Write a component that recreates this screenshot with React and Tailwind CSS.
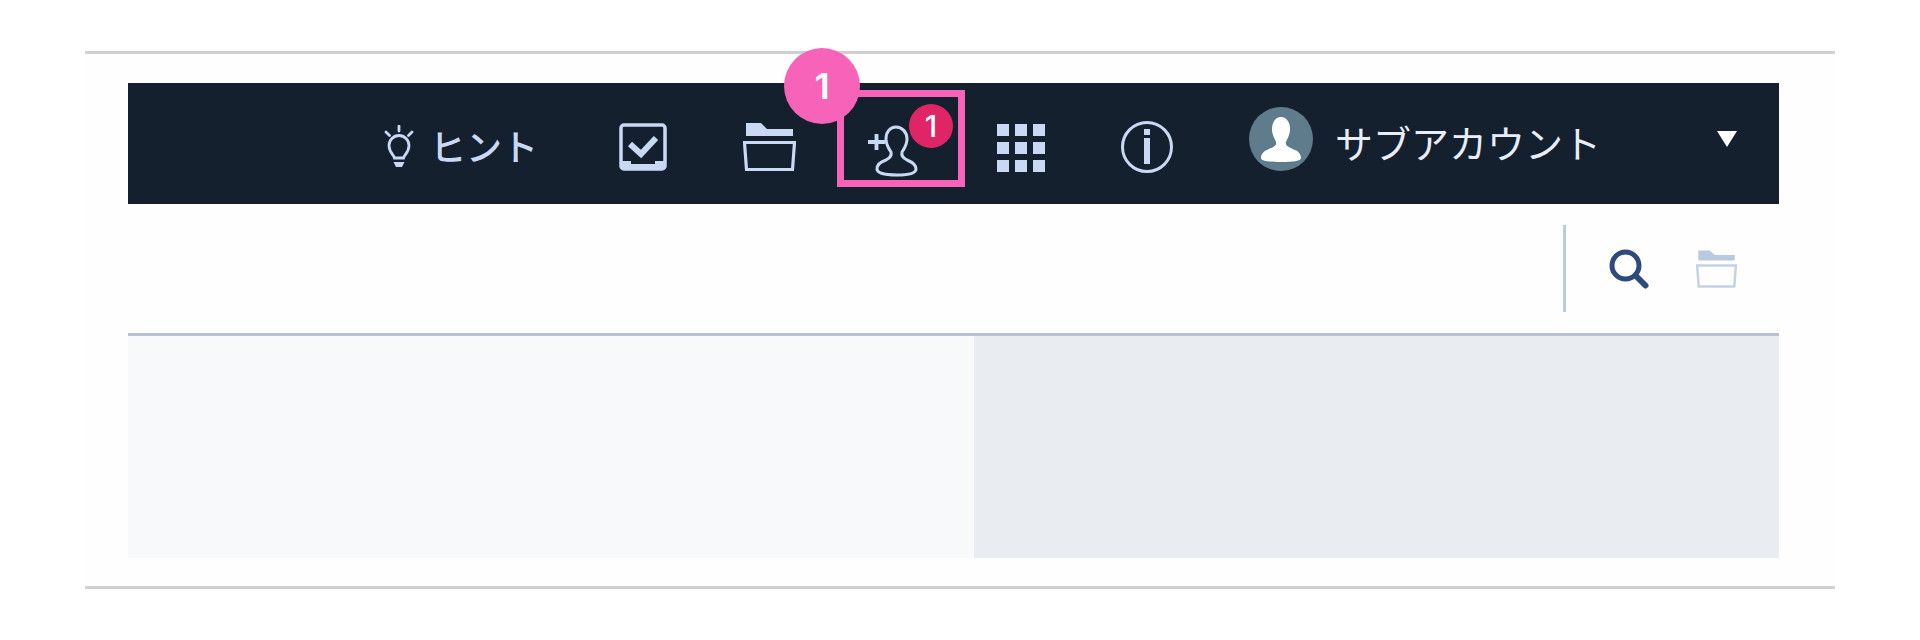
import React from "react";

const ICON = "#c9d9f3";
const JP = "font-['Noto_Sans_CJK_JP','Noto_Sans',sans-serif]";

const BulbIcon = () => (
    <svg width="32" height="44" viewBox="0 0 32 44" fill="none" stroke={ICON} strokeWidth="2.8" strokeLinecap="round">
        <path d="M11.5 33c-.5-3-5.500-5.500-5.500-12.500a10 10 0 0 1 20 0c0 7-5 9.500-5.500 12.500z" />
        <path d="M10.500 37h11l-2.500 5h-6z" fill={ICON} stroke="none" />
        <path d="M16 1v5M3 7l3.500 3.500M29 7l-3.500 3.500" />
    </svg>
);

const TaskIcon = () => (
    <svg width="48" height="48" viewBox="0 0 48 48" fill="none">
        <rect x="2" y="2" width="44" height="44" rx="3" stroke={ICON} strokeWidth="3.5" />
        <path d="M2 38h10v3h24v-3h10v6a2 2 0 0 1-2 2H4a2 2 0 0 1-2-2z" fill={ICON} />
        <path d="M11 21l11 10 15-16" stroke={ICON} strokeWidth="6" />
    </svg>
);

const FolderIcon = ({ width, height, fill, frame }) => (
    <svg width={width} height={height} viewBox="0 0 53 48" fill="none">
        <path d="M3 0h15l6 6h26v7H3z" fill={fill} />
        <path d="M1.500 19.500h50l-2 27H3.500z" stroke={frame} strokeWidth="3.200" />
    </svg>
);

const AddUserIcon = () => (
    <svg width="52" height="52" viewBox="0 0 52 52" fill="none" stroke={ICON} strokeLinecap="round">
        <path d="M0 17h17M8.500 9v16" strokeWidth="3.800" strokeLinecap="butt" />
        <path d="M28 2c-6 0-10 5-10 12 0 6 3 10 5 13 1 4-1 6-5 8-6 2-9 5-9 9 0 4 8 6 20 6s19-2 19-6c0-4-4-7-9-9-4-2-6-4-5-8 2-3 5-7 5-13 0-7-5-12-11-12z" strokeWidth="3" />
    </svg>
);

const InfoIcon = () => (
    <svg width="52" height="52" viewBox="0 0 52 52" fill="none" stroke={ICON}>
        <circle cx="26" cy="26" r="24.500" strokeWidth="3" />
        <path d="M26 8v6" strokeWidth="6" />
        <path d="M26 17v26" strokeWidth="6" />
    </svg>
);

const Avatar = () => (
    <svg width="64" height="64" viewBox="0 0 64 64">
        <circle cx="32" cy="32" r="32" fill="#5f7c8d" />
        <path d="M32 10c-6 0-9 6-9 12 0 6 3 10 4 13 1 4-3 5-9 8-5 2-6 6-6 8 0 3 8 4 20 4s20-1 20-4c0-2-1-6-6-8-6-3-10-4-9-8 1-3 4-7 4-13 0-6-3-12-9-12z" fill="#fff" />
    </svg>
);

const SearchIcon = () => (
    <svg width="40" height="40" viewBox="0 0 40 40" fill="none" stroke="#2c4a7c" strokeLinecap="round">
        <circle cx="16.500" cy="16.500" r="13.500" strokeWidth="5" />
        <path d="M28 28l8.500 8.500" strokeWidth="6" />
    </svg>
);

const dots = [0, 1, 2, 3, 4, 5, 6, 7, 8];

const App = () => {
    return (
        <div className={`w-[1920px] h-[640px] bg-white overflow-hidden pt-[51px] pl-[85px] ${JP}`}>
            <div className="w-[1750px] h-[538px] bg-[#fefefe] border-y-[3px] border-[#cfd0d1] pt-[29px] pl-[43px] pr-[56px]">
                {/* top bar */}
                <div className="h-[121px] bg-[#15202e] flex items-center relative">
                    <div className="ml-[255px] mt-[7px] flex items-center">
                        <BulbIcon />
                    </div>
                    <span className="ml-[15px] mt-[3px] text-[36px] font-medium leading-none text-[#c9d9f3]">ヒント</span>
                    <div className="ml-[81px] mt-[7px] flex"><TaskIcon /></div>
                    <div className="ml-[76px] mt-[7px] flex"><FolderIcon width={53} height={48} fill={ICON} frame={ICON} /></div>
                    <div className="relative ml-[41px] self-start mt-[7px] w-[128px] h-[97px] border-[7px] border-[#f763b9] flex">
                        <div className="ml-[24px] mt-[28px]"><AddUserIcon /></div>
                        <div className="absolute left-[65px] top-[7px] w-[44px] h-[44px] rounded-full bg-[#df2565] flex items-center justify-center text-[30px] leading-none font-['Inter',sans-serif] font-medium text-[#fff]">1</div>
                        <div className="absolute left-[-60px] top-[-49px] w-[76px] h-[76px] rounded-full bg-[#f763b9] flex items-center justify-center text-[36px] leading-none font-['Inter',sans-serif] font-semibold text-white">1</div>
                    </div>
                    <div className="ml-[32px] mt-[8px] grid grid-cols-3 gap-[6px]">
                        {dots.map((d) => (
                            <div key={d} className="w-[12px] h-[12px] bg-[#c9d9f3]" />
                        ))}
                    </div>
                    <div className="ml-[76px] mt-[7px] flex"><InfoIcon /></div>
                    <div className="ml-[76px] mt-[-9px] flex"><Avatar /></div>
                    <span className="ml-[22px] mt-[-3px] text-[38px] leading-none text-[#e8eef8] whitespace-nowrap">サブアカウント</span>
                    <div className="ml-auto mr-[42px] mt-[-9px] w-0 h-0 border-x-[10px] border-x-transparent border-t-[16px] border-t-white" />
                </div>

                {/* tools row */}
                <div className="h-[132px] bg-[#fefefe] border-b-[3px] border-b-[#b4c2d2] flex items-center">
                    <div className="ml-auto w-[3px] h-[87px] bg-[#bccbdc]" />
                    <div className="ml-[43px] flex"><SearchIcon /></div>
                    <div className="ml-[47px] mr-[42px] flex"><FolderIcon width={41} height={38} fill="#b9c9de" frame="#c5d2e2" /></div>
                </div>

                {/* panels */}
                <div className="h-[222px] flex">
                    <div className="w-[846px] bg-[#f7f9fb]" />
                    <div className="flex-1 bg-[#e9ecf1]" />
                </div>
            </div>
        </div>
    );
};

export default App;
